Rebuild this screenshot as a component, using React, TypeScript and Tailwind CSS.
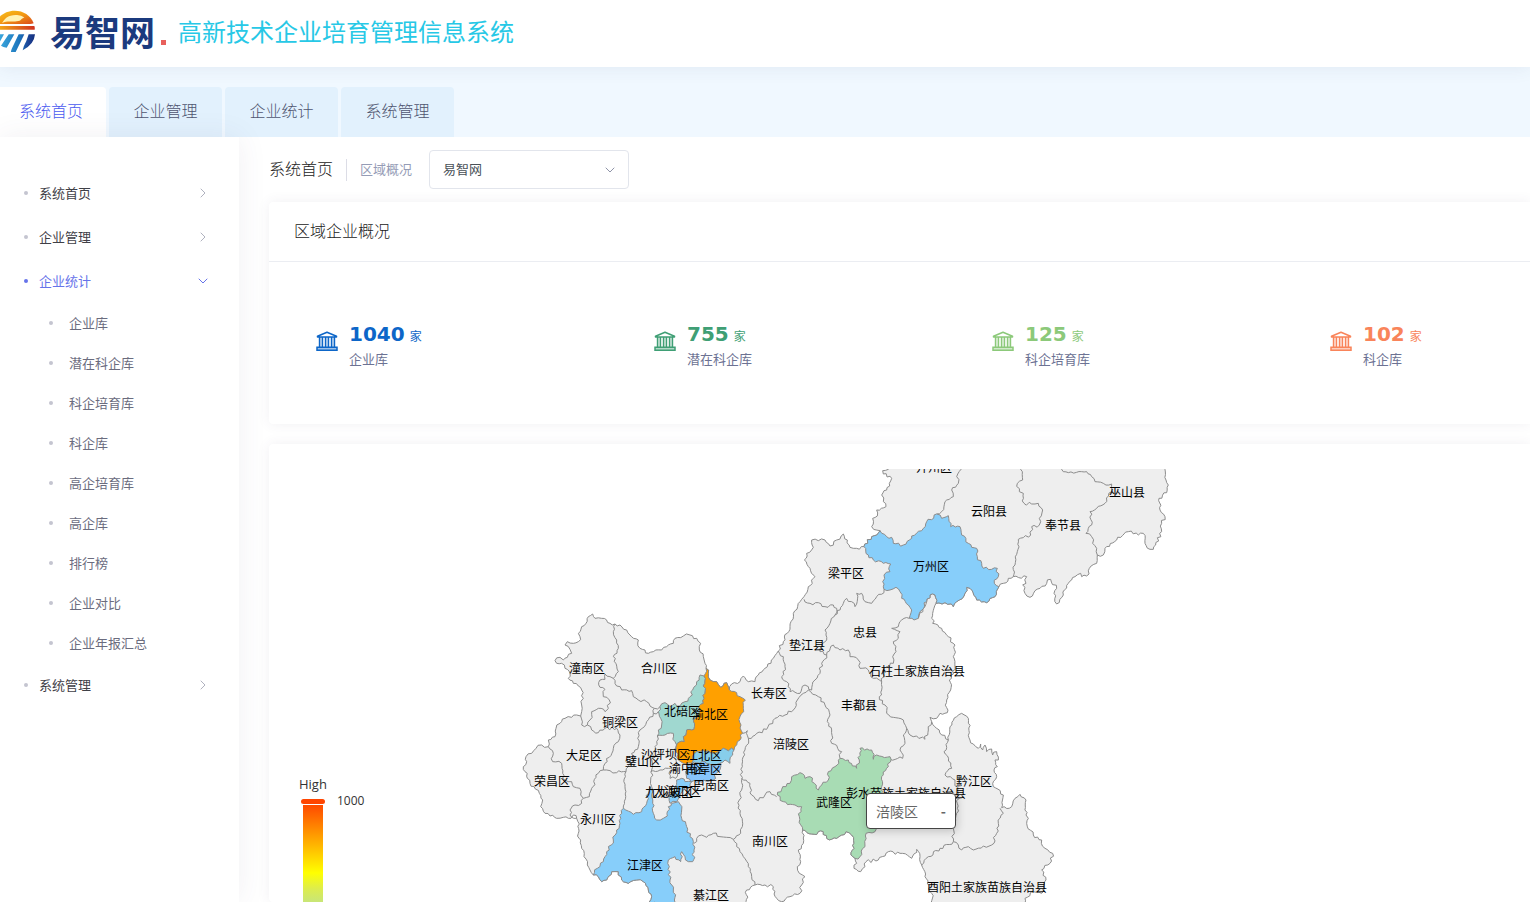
import { ChevronDown, ChevronRight } from "lucide-react";

type Pt = [number, number];

/** Parses "x,y x,y" pairs and shifts them by the origin of their map sheet. */
function sheet(ox: number, oy: number) {
  return (s: string): Pt[] =>
    s
      .trim()
      .split(/\s+/)
      .map((p) => {
        const [x, y] = p.split(",").map(Number);
        return [x + ox, y + oy] as Pt;
      });
}

const W = sheet(0, 420);
const N = sheet(690, 0);
const E = sheet(1350, 0);
const S = sheet(690, 660);

function hash(a: number, b: number) {
  const v = Math.sin(a * 12.9898 + b * 78.233) * 43758.5453;
  return v - Math.floor(v) - 0.5;
}

/** Adds small bends between two points; a shared border bends alike from both sides. */
function between(a: Pt, b: Pt): Pt[] {
  const flip = a[0] > b[0] || (a[0] === b[0] && a[1] > b[1]);
  const [p, q] = flip ? [b, a] : [a, b];
  const dx = q[0] - p[0];
  const dy = q[1] - p[1];
  const len = Math.hypot(dx, dy);
  const n = Math.floor(len / 7);
  const mid: Pt[] = [];
  for (let i = 1; i < n; i++) {
    const t = i / n;
    const x = p[0] + dx * t;
    const y = p[1] + dy * t;
    const k = hash(Math.round(x), Math.round(y)) * 10;
    mid.push([x - (dy / len) * k, y + (dx / len) * k]);
  }
  return flip ? mid.reverse() : mid;
}

function line(pts: Pt[]) {
  let d = `M${pts[0][0]} ${pts[0][1]}`;
  for (let i = 1; i < pts.length; i++) {
    for (const m of [...between(pts[i - 1], pts[i]), pts[i]]) {
      d += `L${m[0].toFixed(1)} ${m[1].toFixed(1)}`;
    }
  }
  return d;
}

const land: Pt[] = [
  ...W(
    "250,825 240,810 232,795 222,770 215,745 212,720 205,700 208,672 200,655 190,645 183,655 160,652 140,655 120,648 105,640 92,620 98,600 88,580 72,560 60,550 52,535 45,515 40,500 50,485 48,470 65,460 78,445 95,435 115,440 118,432 115,420 135,410 138,385 150,370 165,355 185,352 200,345 212,348 215,335 215,315 220,295 215,270 205,258 190,250 175,235 180,220 165,205 155,190 140,190 135,182 150,172 160,180 172,172 185,160 180,148 165,135 172,125 190,130 205,125 210,110 205,100 215,80 228,70 235,50 248,42 255,55 275,55 300,70 315,72 330,75 350,90 360,105 385,120 390,145 405,150 415,160 430,155 455,150 470,140 490,130 495,115 520,108 540,105 560,115 572,130 568,150 580,170 585,190 588,205 595,220 600,240 620,245 632,262 650,248 658,270 665,252",
  ),
  ...N(
    "0,665 10,648 25,665 45,665 55,645 75,625 100,595 115,573 130,545 150,500 160,460 185,418 192,410 205,380 225,350 210,325 193,300 200,280 220,262 215,240 235,242 255,240 270,258 290,240 310,222 322,240 330,262 350,265 372,260 395,230 420,212 395,200 398,175 412,168 410,150 438,140 430,125 425,105 440,90 448,70 455,55 430,42 428,32 445,28 445,10",
  ),
  ...E(
    "615,10 615,28 618,60 625,75 620,98 597,115 600,150 615,170 605,190 605,215 580,268 570,268 555,250 550,220 535,225 505,215 470,240 435,265 430,285 412,285 410,310 388,325 380,348 365,350 362,340 345,350 325,370 310,405 290,432 282,400 290,385 272,358 240,385 210,412 195,400 188,375 198,370 200,350 160,350 145,355 130,370 117,380",
  ),
  ...N(
    "765,410 740,428 710,420 690,385 680,382 672,408 650,425 640,440 615,428 588,430 578,460 578,490 605,505 625,530 645,555 640,590 645,620 628,660 632,690",
  ),
  ...S(
    "620,60 622,98 600,100 590,115 570,112 575,125 590,145 605,165 625,180 630,140 650,110 665,100 685,115 690,180 700,192 715,205 722,192 728,210 735,195 740,215 755,207 758,225 770,215 775,240 765,240 772,260 762,270 770,290 760,320 790,345 785,383 815,380 825,355 840,343 858,360 858,405 865,415 860,430 880,465 905,480 915,505 938,520 930,550 905,570 918,600 905,640 880,635 855,655 850,690 580,690 575,640 555,590 545,555 540,530 530,508 515,535 480,520 445,515 415,540 378,545 375,560 362,575 342,565 350,550 345,535 333,525 342,490 335,465 318,455 290,475 260,475 250,455 215,462 188,450 190,490 175,510 182,545 172,560 178,580 195,590 185,615 180,640 150,650 125,665 110,655 100,620 75,615 45,615 20,630 18,665 18,690",
  ),
  ...W(
    "498,930 418,906 425,890 415,870 400,845 380,840 355,850 335,840 325,815 305,815 290,840 275,845 265,830 250,825",
  ),
];

const borders: Pt[][] = [
  W("315,72 310,95 320,120 325,145 310,170 318,190 325,215 310,235 300,230 285,222 285,238 270,240 270,262 285,268 280,290 298,300 295,325 285,335 265,325 245,335 240,360 232,375 215,375 212,348"),
  W("232,375 245,390 265,398 285,385 320,385 330,405 325,425 310,445 285,490 280,510 300,512 320,518 348,515"),
  W("310,235 320,258 335,270 365,272 370,290 385,300 410,305 420,318 433,325 430,340 410,365 390,390 383,415 385,440 365,460 370,480 355,500 348,515 345,560 340,625"),
  W("433,325 450,320"),
  W("430,340 445,335"),
  W("442,408 435,440 430,470 425,510 422,540 425,560 428,575"),
  W("280,510 265,520 245,565 238,590 220,595 215,610 195,615 180,630 180,645 200,655"),
  W("115,440 130,460 128,485 155,490 158,520 165,540 185,545 190,560 210,565 212,585 220,595"),
  W("422,515 450,510 475,505 490,510 500,495 498,478"),
  W("480,512 500,512 497,535 480,535 480,512"),
  W("698,400 712,392 715,415 705,450 697,500 695,540 688,600 690,640 697,680 692,700 670,718 650,712 630,710 610,700 590,712 575,705 560,715 552,730"),
  W("670,718 680,740 690,755 700,770 715,800 725,830 735,855"),
  S("25,175 50,160 80,148 105,115 135,105 160,90 172,60 190,40 205,30 212,35"),
  S("5,295 30,310 35,345 55,362 75,345 90,335 110,350"),
  N("192,418 210,430 235,428 255,440 280,435 290,445 285,465 310,430 320,415 335,425 345,440 350,400 365,400 375,425 395,430 410,410 432,398 432,388"),
  N("285,465 270,490 255,510 260,540 245,560 240,575 260,585 245,610 240,640 225,660 215,690 205,680 195,675 180,700 150,695 140,665 125,650 135,620 130,590 115,573"),
  N("260,585 280,555 300,570 325,570 330,590 355,600 360,625 385,630 400,655 425,665"),
  N("508,475 485,480 475,500 455,505 480,515 475,535 460,545 468,575 458,590 460,610 440,620 430,640 425,665 425,690 418,710"),
  N("535,475 560,425 570,405 585,405 588,430"),
  S("418,50 435,75 440,100 460,112 490,120 500,145 510,165 530,168 555,178 565,150 575,125"),
  S("212,35 235,50 255,75 270,105 262,125 275,150 275,190 305,215 300,235"),
  S("500,145 490,165 495,190 480,210 488,235 450,238"),
  S("545,555 565,530 600,505 640,485 655,495 665,510 685,500 700,510 730,498 755,495 770,460 775,430 790,400 780,385"),
  S("625,180 612,215 635,265 615,285 645,300 655,340 650,400 640,445 640,485"),
  N("663,20 663,28 650,50 655,70 635,90 640,110 615,125 605,155 590,162"),
  E("182,20 182,28 188,60 172,70 178,95 190,100 192,130 215,132 235,130 248,150 238,175 238,195 215,200 212,225 175,238 172,275 165,315 160,350"),
  E("305,20 305,28 325,38 365,35 380,35 395,50 405,65 430,70 455,72 455,95 435,130 410,145 390,155 395,195 378,220 395,230 398,250 410,265 412,285"),
];

const shaded: { name: string; color: string; pts: Pt[] }[] = [
  {
    name: "wanzhou",
    color: "#87cefa",
    pts: N(
      "372,260 395,230 420,212 440,230 455,232 460,250 490,255 515,235 515,228 550,205 560,185 590,162 605,175 625,167 632,200 660,200 665,225 685,250 695,262 710,265 712,290 725,310 730,325 755,328 772,325 775,350 763,370 777,380 765,410 740,428 710,420 690,385 680,382 672,408 650,425 640,440 615,428 588,430 585,405 570,405 560,425 540,455 535,475 522,480 508,475 515,450 505,435 485,415 480,395 468,382 450,390 432,388 428,365 432,345 450,335 452,312 430,310 400,300 385,285 372,260",
    ),
  },
  {
    name: "wulong",
    color: "#a8dcb4",
    pts: S(
      "300,235 325,240 350,265 358,240 360,205 395,210 400,238 410,225 450,230 445,260 425,290 425,320 420,400 405,455 378,460 375,500 360,530 345,535 333,525 342,490 335,465 318,455 290,475 260,475 250,455 215,462 188,450 178,410 185,380 165,375 130,365 112,345 125,328 150,310 155,290 180,278 195,295 210,290 235,330 245,315 265,300 265,275 285,260 300,235",
    ),
  },
  {
    name: "jiangjin",
    color: "#87cefa",
    pts: W(
      "340,625 370,643 395,635 410,610 415,580 420,560 428,575 425,590 428,610 430,640 440,660 460,655 472,648 475,620 485,610 505,605 515,630 515,655 530,680 540,710 550,725 552,750 548,785 535,785 525,770 515,755 512,785 495,770 475,780 478,800 480,840 490,870 498,930 418,906 425,890 415,870 400,845 380,840 355,850 335,840 325,815 305,815 290,840 275,845 265,830 250,825 262,805 280,785 290,755 310,720 320,690 330,670 335,640 340,625",
    ),
  },
  {
    name: "beibei",
    color: "#a0d8d0",
    pts: W(
      "582,228 570,225 560,245 548,270 540,290 525,305 510,318 495,310 480,320 465,308 450,320 445,335 452,355 455,375 445,390 442,408 465,405 490,400 495,425 493,450 498,442 502,430 523,425 520,410 528,405 530,390 552,388 555,355 565,345 565,320 580,310 585,280 582,228",
    ),
  },
  {
    name: "yubei",
    color: "#ffa000",
    pts: W(
      "588,205 595,220 600,240 620,245 632,262 650,248 658,270 680,278 690,290 706,300 700,325 690,350 693,375 698,400 690,420 672,450 640,445 625,455 600,458 580,450 560,455 550,465 545,490 520,490 505,480 498,455 498,442 502,430 523,425 520,410 528,405 530,390 552,388 555,355 565,345 565,320 580,310 585,280 582,228 588,205",
    ),
  },
  {
    name: "jiangbei",
    color: "#87ceeb",
    pts: W(
      "672,450 640,445 625,455 600,458 580,450 560,455 550,465 545,490 570,490 585,485 605,495 630,490 645,480 660,490 668,465 672,450",
    ),
  },
  {
    name: "nanan",
    color: "#87c4fa",
    pts: W("530,500 545,492 570,490 585,485 605,495 632,490 625,515 610,540 580,540 560,548 530,535 530,500"),
  },
  {
    name: "dadukou",
    color: "#87cefa",
    pts: W("500,540 515,535 525,545 545,545 540,560 520,570 510,590 500,605 480,610 478,585 500,575 500,540"),
  },
];

const districts: [string, number, number][] = [
  ["开州区", 934, 467],
  ["云阳县", 989, 511],
  ["巫山县", 1127, 492],
  ["奉节县", 1063, 525],
  ["万州区", 931, 566],
  ["梁平区", 846, 573],
  ["忠县", 865, 632],
  ["垫江县", 807, 645],
  ["石柱土家族自治县", 917, 671],
  ["长寿区", 769, 693],
  ["丰都县", 859, 705],
  ["涪陵区", 791, 744],
  ["武隆区", 834, 802],
  ["彭水苗族土家族自治县", 906, 793],
  ["黔江区", 974, 781],
  ["酉阳土家族苗族自治县", 987, 887],
  ["南川区", 770, 841],
  ["潼南区", 587, 668],
  ["合川区", 659, 668],
  ["铜梁区", 620, 722],
  ["大足区", 584, 755],
  ["荣昌区", 552, 781],
  ["永川区", 598, 819],
  ["璧山区", 643, 761],
  ["北碚区", 682, 711],
  ["渝北区", 710, 714],
  ["沙坪坝区", 665, 754],
  ["江北区", 704, 755],
  ["渝中区", 687, 768],
  ["南岸区", 704, 769],
  ["巴南区", 711, 785],
  ["九龙坡区", 669, 792],
  ["大渡口区", 677, 791],
  ["江津区", 645, 865],
  ["綦江区", 711, 895],
];

function RegionMap() {
  return (
    <svg className="block" width="1236" height="433" viewBox="294 469 1236 433" role="img" aria-label="区域企业分布">
      <defs>
        <linearGradient id="scale" x1="0" y1="805" x2="0" y2="902" gradientUnits="userSpaceOnUse">
          <stop offset="0" stopColor="#ff4a00" />
          <stop offset="0.35" stopColor="#ffa500" />
          <stop offset="0.7" stopColor="#ffff00" />
          <stop offset="0.87" stopColor="#dcec50" />
          <stop offset="1" stopColor="#c8e678" />
        </linearGradient>
      </defs>
      <g transform="translate(510 460) scale(.33333)" stroke="#8c8c8c" strokeWidth="3" strokeLinejoin="round">
        <path d={line(land) + "Z"} fill="#eee" />
        {borders.map((b, i) => (
          <path key={i} d={line(b)} fill="none" />
        ))}
        {shaded.map((r) => (
          <path key={r.name} d={line(r.pts) + "Z"} fill={r.color} />
        ))}
      </g>
      <g className="font-['Noto_Sans_CJK_SC',sans-serif] text-[12px]" fill="#000" textAnchor="middle">
        {districts.map(([name, x, y]) => (
          <text key={name} x={x} y={y + 5}>
            {name}
          </text>
        ))}
      </g>
      <rect x="303" y="805" width="20" height="110" fill="url(#scale)" />
      <rect x="301" y="799" width="24" height="5" rx="2.5" fill="#ff4500" />
      <g className="font-['Open_Sans',sans-serif] text-[12px]" fill="#333">
        <text className="text-[13px]" x="299" y="789">
          High
        </text>
        <text x="337" y="805">
          1000
        </text>
      </g>
    </svg>
  );
}

function Logo() {
  return (
    <svg width="36" height="42" viewBox="0 15 108 126" aria-hidden="true">
      <defs>
        <linearGradient id="sun" x1="0" y1="0" x2="1" y2="1">
          <stop offset="0" stopColor="#f6c31c" />
          <stop offset="0.5" stopColor="#f39a12" />
          <stop offset="1" stopColor="#d9471c" />
        </linearGradient>
        <linearGradient id="sea" x1="0" y1="0" x2="105" y2="0" gradientUnits="userSpaceOnUse">
          <stop offset="0" stopColor="#3aa6dc" />
          <stop offset="0.55" stopColor="#1c75bd" />
          <stop offset="0.85" stopColor="#1b3f92" />
          <stop offset="1" stopColor="#16307c" />
        </linearGradient>
        <linearGradient id="horizon" x1="0" y1="0" x2="105" y2="0" gradientUnits="userSpaceOnUse">
          <stop offset="0" stopColor="#f2a516" />
          <stop offset="1" stopColor="#d0301f" />
        </linearGradient>
      </defs>
      <path d="M-12 57C-6 33 16 17 44 17C70 17 92 31 101 55Q96 57 90 57Z" fill="url(#sun)" />
      <path d="M6 54C13 45 17 36 32 32C47 27 68 31 73 38C62 40 66 47 50 49C34 51 22 46 6 54Z" fill="#fff2b4" />
      <path d="M-5 63H103Q105 68 104 74H-5Z" fill="url(#horizon)" />
      <path
        d="M-5 88H12L-5 118ZM26 88H43L20 128Q9 126 3 122ZM56 88H73L47 141H33Q32 139 36 130ZM86 88H105Q103 118 68 136Q70 124 79 108Z"
        fill="url(#sea)"
      />
    </svg>
  );
}

function BankIcon() {
  return (
    <svg width="22" height="20" viewBox="0 0 22 20" fill="none" stroke="currentColor" strokeWidth="1.5" aria-hidden="true">
      <path d="M1.5 6V5.2L11 1.2l9.5 4V6Z" strokeLinejoin="round" />
      <path d="M3.5 6v10M6.5 6v10M9.5 6v10M12.5 6v10M15.5 6v10M18.5 6v10" strokeWidth="1.4" />
      <path d="M5 6v10M11 6v10M17 6v10" strokeWidth="1.5" strokeOpacity=".35" />
      <path d="M1 16.2h20v3H1z" fill="currentColor" fillOpacity=".4" />
    </svg>
  );
}

const tabs = ["企业管理", "企业统计", "系统管理"];
const statItems = ["企业库", "潜在科企库", "科企培育库", "科企库", "高企培育库", "高企库", "排行榜", "企业对比", "企业年报汇总"];
const stats = [
  { value: 1040, label: "企业库", tone: "text-[#0d66c8]" },
  { value: 755, label: "潜在科企库", tone: "text-[#3f9f75]" },
  { value: 125, label: "科企培育库", tone: "text-[#8cc97a]" },
  { value: 102, label: "科企库", tone: "text-[#f9845a]" },
];

function MenuItem({ label, open = false }: { label: string; open?: boolean }) {
  return (
    <a href="#" className={`flex h-11 items-center pr-7 pl-6 text-[13px] ${open ? "text-[#6673ea]" : "text-[#3f4047]"}`}>
      <span className={`mr-[11px] size-1 rounded-full ${open ? "bg-[#6673ea]" : "bg-[#c4c5d0]"}`} />
      <span className="flex-1">{label}</span>
      {open ? <ChevronDown size={16} strokeWidth={1.5} /> : <ChevronRight size={16} strokeWidth={1.5} className="text-[#b0b2bf]" />}
    </a>
  );
}

export default function App() {
  return (
    <div className="flex min-h-screen flex-col overflow-hidden bg-white font-['Noto_Sans_CJK_SC',sans-serif] text-[#3f4047]">
      <header className="relative z-10 flex h-[67px] items-center bg-white pb-1.5 shadow-[0_2px_16px_rgba(60,80,110,0.08)]">
        <Logo />
        <span className="ml-3.5 text-[35px] leading-10 font-bold text-[#1b3a7e]">易智网</span>
        <span className="mt-6 ml-1.5 size-[5px] bg-[#e8605c]" />
        <h1 className="ml-3 text-2xl leading-8 text-[#27c8e6]">高新技术企业培育管理信息系统</h1>
      </header>

      <nav className="flex gap-[3px] bg-[#f0f8ff] pt-5 text-base">
        <a href="#" className="flex h-[50px] w-[106px] items-center rounded-tr bg-white pb-1 pl-[19px] font-light text-[#4a5af0]">
          系统首页
        </a>
        {tabs.map((t) => (
          <a
            key={t}
            href="#"
            className="flex h-[50px] w-[113px] items-center justify-center rounded-t bg-[#e2f1fd] pb-1 font-light text-[#4f5570]"
          >
            {t}
          </a>
        ))}
      </nav>

      <div className="flex flex-1">
        <aside className="w-[239px] shrink-0 bg-white pt-[34px] shadow-[0_0_28px_rgba(82,63,105,0.08)]">
          <MenuItem label="系统首页" />
          <MenuItem label="企业管理" />
          <MenuItem label="企业统计" open />
          <ul>
            {statItems.map((s) => (
              <li key={s}>
                <a href="#" className="flex h-10 items-center pl-[49px] text-[13px] text-[#6b6c7e]">
                  <span className="mr-4 size-1 rounded-full bg-[#c4c5d0]" />
                  {s}
                </a>
              </li>
            ))}
          </ul>
          <MenuItem label="系统管理" />
        </aside>

        <main className="flex min-w-0 flex-1 flex-col pl-[30px]">
          <div className="flex h-[65px] items-center">
            <h2 className="pb-1 text-base font-light text-[#222]">系统首页</h2>
            <span className="mx-[13px] h-[22px] w-px bg-[#dcdde6]" />
            <label htmlFor="area" className="pb-0.5 text-[13px] text-[#959cb6]">
              区域概况
            </label>
            <div className="relative ml-[17px]">
              <select
                id="area"
                className="h-[39px] w-[200px] appearance-none rounded border border-[#e2e5ec] bg-white px-[13px] pb-0.5 text-[13px] text-[#495057]"
              >
                <option>易智网</option>
              </select>
              <ChevronDown size={16} strokeWidth={1.5} className="pointer-events-none absolute top-3 right-[11px] text-[#8f94a8]" />
            </div>
          </div>

          <section className="rounded-l bg-white shadow-[0_0_13px_rgba(82,63,105,0.08)]">
            <h3 className="border-b border-[#ebedf2] px-[25px] pt-4 pb-[18px] text-base leading-[25px] font-light text-[#222]">区域企业概况</h3>
            <div className="grid grid-cols-[repeat(4,minmax(338px,1fr))] px-[25px] pt-[59px] pb-[55px]">
              {stats.map((s) => (
                <div key={s.label} className={`flex pl-[22px] ${s.tone}`}>
                  <span className="mt-2.5 mr-[11px]">
                    <BankIcon />
                  </span>
                  <div>
                    <p className="flex items-baseline gap-[5px] leading-[26px]">
                      <b className="font-['DejaVu_Sans',sans-serif] text-xl leading-[26px] font-bold">{s.value}</b>
                      <span className="text-[12px]">家</span>
                    </p>
                    <p className="text-[13px] leading-5 text-[#6c7293]">{s.label}</p>
                  </div>
                </div>
              ))}
            </div>
          </section>

          <section className="mt-5 flex-1 rounded-l bg-white pt-[25px] pl-[25px] shadow-[0_0_13px_rgba(82,63,105,0.08)]">
            <div className="relative">
              <RegionMap />
              <div className="absolute top-[324px] left-[572px] flex h-9 w-[90px] items-center justify-between rounded border border-[#444] bg-white px-[9px] text-sm text-[#666] shadow-[1px_2px_10px_rgba(0,0,0,0.2)]">
                <span>涪陵区</span>
                <b>-</b>
              </div>
            </div>
          </section>
        </main>
      </div>
    </div>
  );
}
